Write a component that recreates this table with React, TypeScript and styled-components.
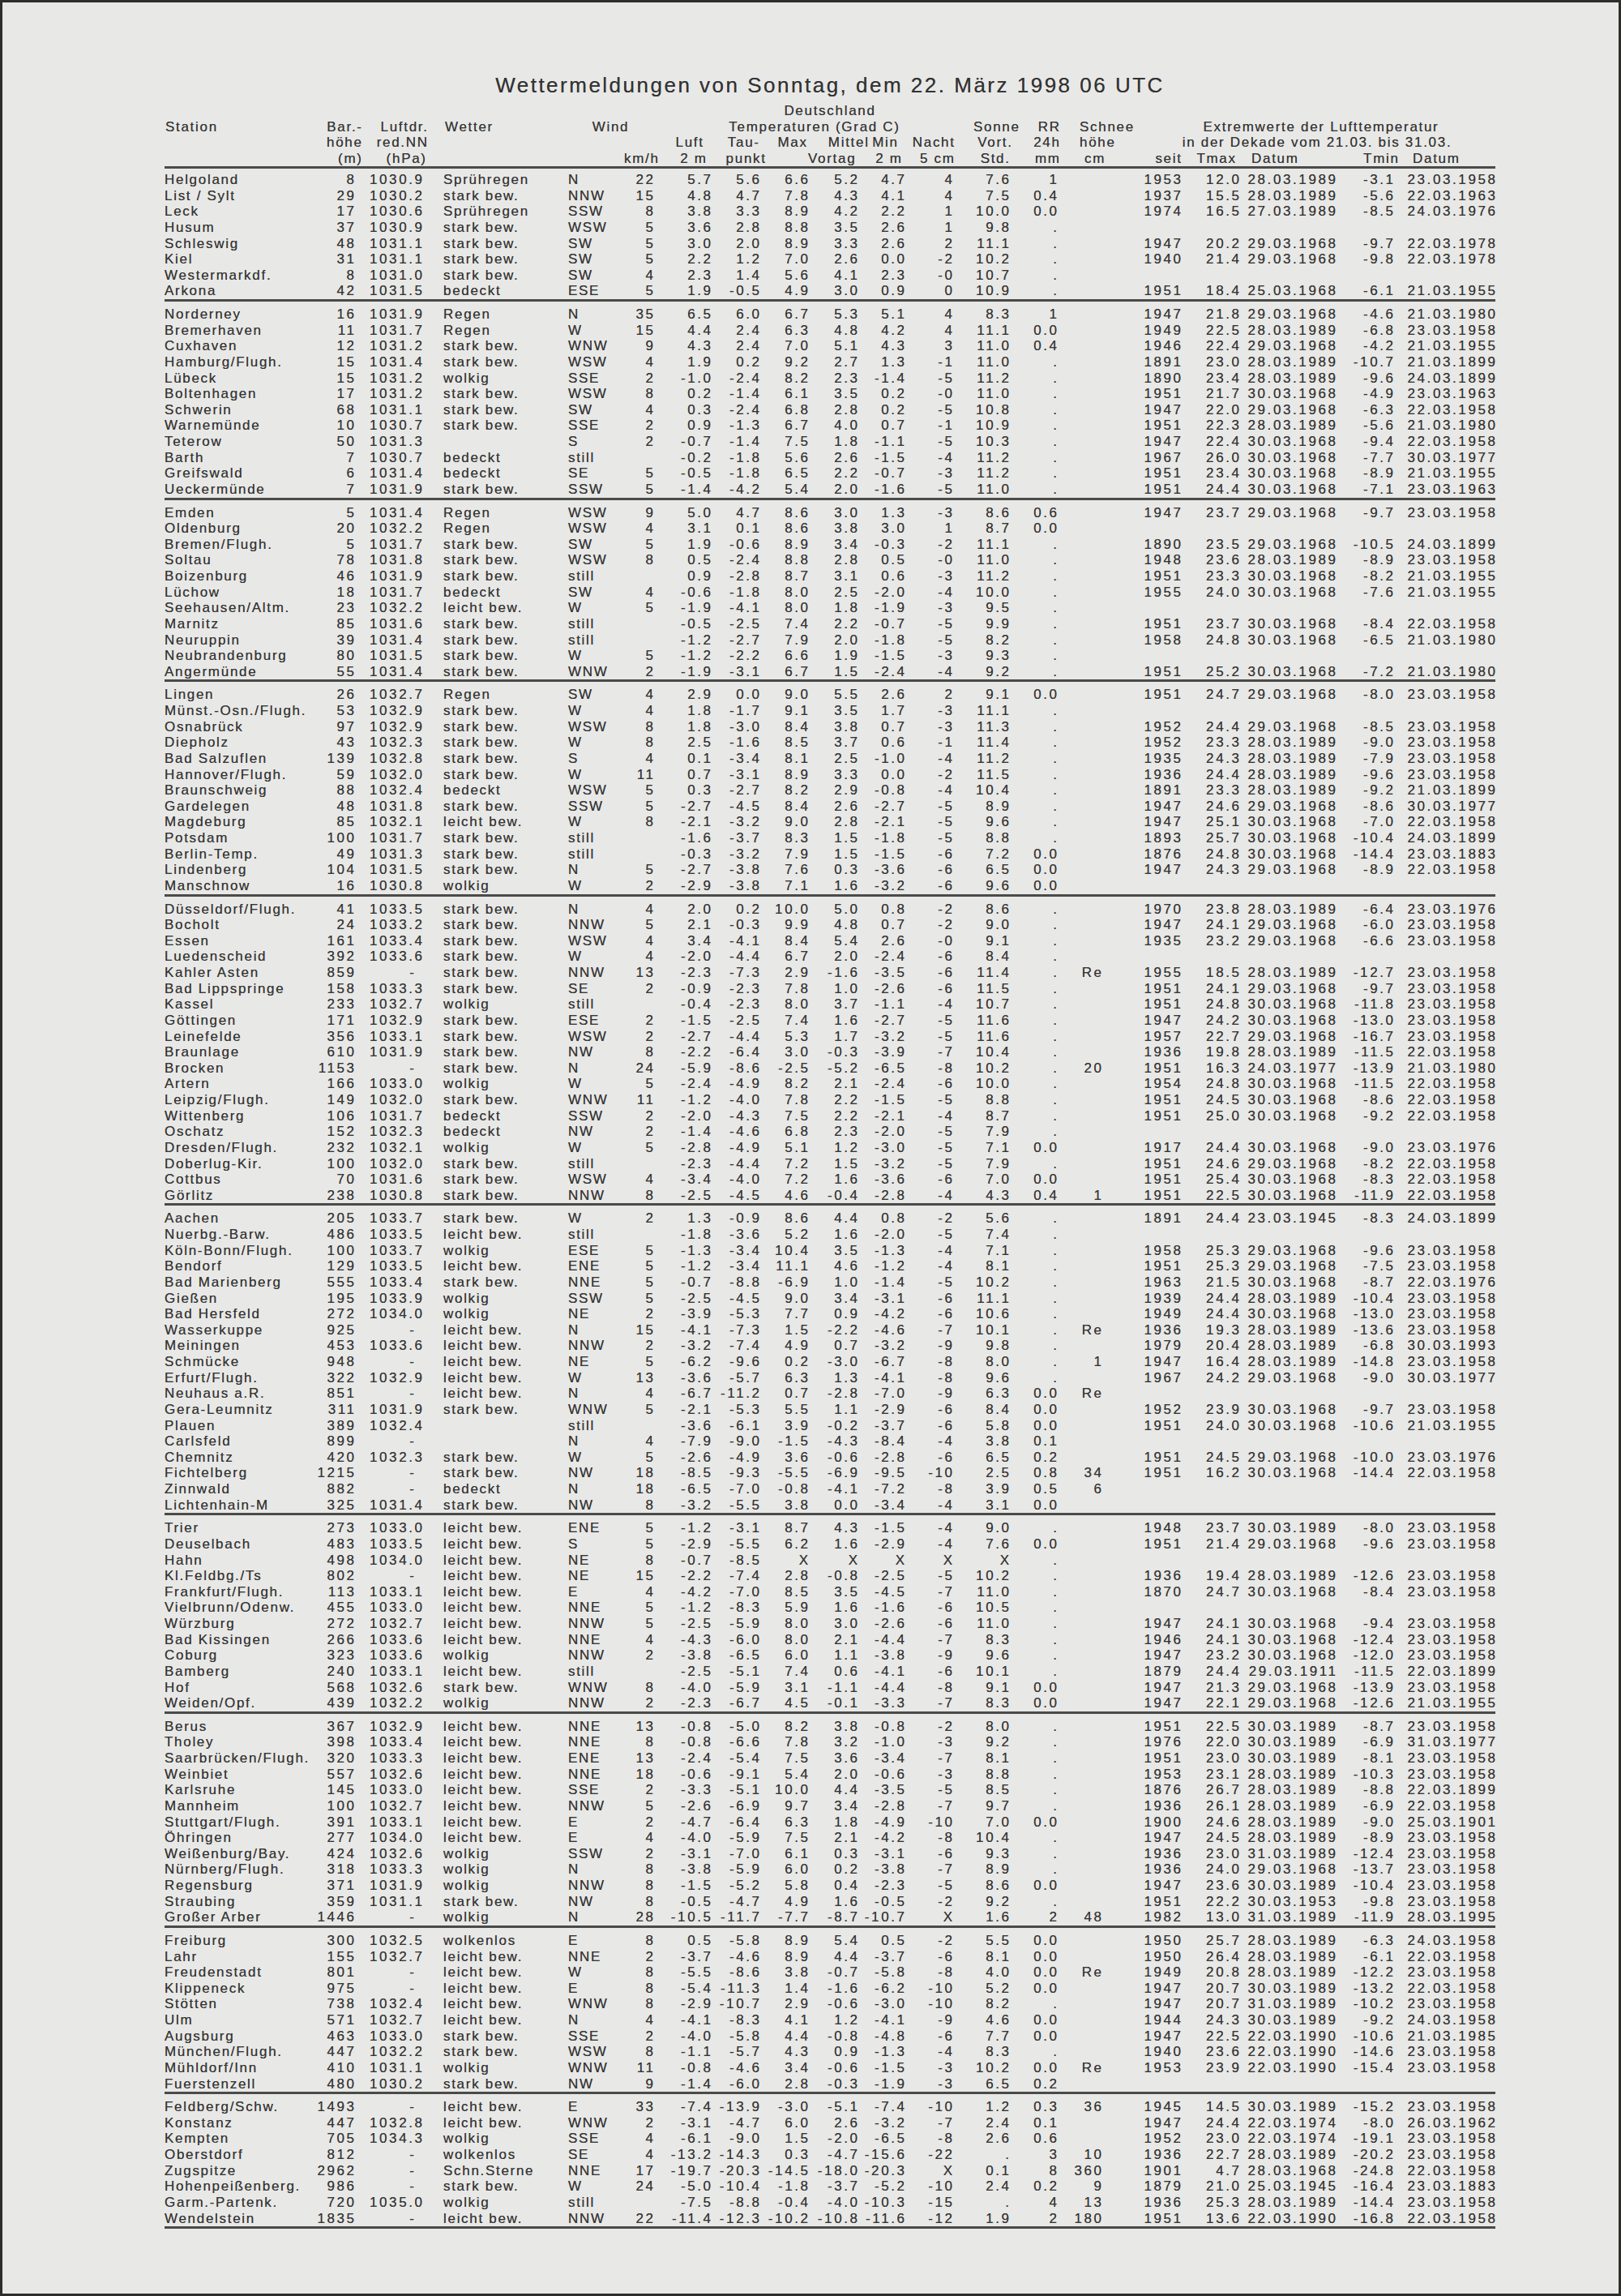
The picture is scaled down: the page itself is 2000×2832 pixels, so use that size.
import React from 'react';
import styled, { createGlobalStyle } from 'styled-components';

// column tracks of the table, left edge of the sheet is x=203
const COLS =
  '177px 57px 84px 180px 69px 36px 71px 60px 60px 61px 58px 59px 70px 59px 55px 98px 72px 119px 71px 126px';

const TEXT_LS = 1.7;
const NUM_LS = 2.6;

type Align = 'left' | 'right' | 'center';

interface ColDef {
  align: Align;
  pad?: number;
  num?: boolean;
}

const BODY: ColDef[] = [
  { align: 'left' }, // Station
  { align: 'right', num: true }, // Bar.-höhe
  { align: 'right', num: true }, // Luftdruck
  { align: 'left', pad: 26 }, // Wetter
  { align: 'left' }, // Windrichtung
  { align: 'right', num: true }, // km/h
  { align: 'right', num: true }, // Luft 2 m
  { align: 'right', num: true }, // Taupunkt
  { align: 'right', num: true }, // Max
  { align: 'right', num: true }, // Mittel
  { align: 'right', num: true }, // Min 2 m
  { align: 'right', num: true }, // Nacht 5 cm
  { align: 'right', num: true }, // Sonne
  { align: 'right', num: true }, // RR
  { align: 'right', num: true }, // Schnee
  { align: 'right', num: true }, // seit
  { align: 'right', num: true }, // Tmax
  { align: 'right', num: true }, // Datum
  { align: 'right', num: true }, // Tmin
  { align: 'right', num: true }, // Datum
];

const GROUPS: string[][] = [
  [
    'Helgoland|8|1030.9|Sprühregen|N|22|5.7|5.6|6.6|5.2|4.7|4|7.6|1||1953|12.0|28.03.1989|-3.1|23.03.1958',
    'List / Sylt|29|1030.2|stark bew.|NNW|15|4.8|4.7|7.8|4.3|4.1|4|7.5|0.4||1937|15.5|28.03.1989|-5.6|22.03.1963',
    'Leck|17|1030.6|Sprühregen|SSW|8|3.8|3.3|8.9|4.2|2.2|1|10.0|0.0||1974|16.5|27.03.1989|-8.5|24.03.1976',
    'Husum|37|1030.9|stark bew.|WSW|5|3.6|2.8|8.8|3.5|2.6|1|9.8|.||||||',
    'Schleswig|48|1031.1|stark bew.|SW|5|3.0|2.0|8.9|3.3|2.6|2|11.1|.||1947|20.2|29.03.1968|-9.7|22.03.1978',
    'Kiel|31|1031.1|stark bew.|SW|5|2.2|1.2|7.0|2.6|0.0|-2|10.2|.||1940|21.4|29.03.1968|-9.8|22.03.1978',
    'Westermarkdf.|8|1031.0|stark bew.|SW|4|2.3|1.4|5.6|4.1|2.3|-0|10.7|.||||||',
    'Arkona|42|1031.5|bedeckt|ESE|5|1.9|-0.5|4.9|3.0|0.9|0|10.9|.||1951|18.4|25.03.1968|-6.1|21.03.1955',
  ],
  [
    'Norderney|16|1031.9|Regen|N|35|6.5|6.0|6.7|5.3|5.1|4|8.3|1||1947|21.8|29.03.1968|-4.6|21.03.1980',
    'Bremerhaven|11|1031.7|Regen|W|15|4.4|2.4|6.3|4.8|4.2|4|11.1|0.0||1949|22.5|28.03.1989|-6.8|23.03.1958',
    'Cuxhaven|12|1031.2|stark bew.|WNW|9|4.3|2.4|7.0|5.1|4.3|3|11.0|0.4||1946|22.4|29.03.1968|-4.2|21.03.1955',
    'Hamburg/Flugh.|15|1031.4|stark bew.|WSW|4|1.9|0.2|9.2|2.7|1.3|-1|11.0|.||1891|23.0|28.03.1989|-10.7|21.03.1899',
    'Lübeck|15|1031.2|wolkig|SSE|2|-1.0|-2.4|8.2|2.3|-1.4|-5|11.2|.||1890|23.4|28.03.1989|-9.6|24.03.1899',
    'Boltenhagen|17|1031.2|stark bew.|WSW|8|0.2|-1.4|6.1|3.5|0.2|-0|11.0|.||1951|21.7|30.03.1968|-4.9|23.03.1963',
    'Schwerin|68|1031.1|stark bew.|SW|4|0.3|-2.4|6.8|2.8|0.2|-5|10.8|.||1947|22.0|29.03.1968|-6.3|22.03.1958',
    'Warnemünde|10|1030.7|stark bew.|SSE|2|0.9|-1.3|6.7|4.0|0.7|-1|10.9|.||1951|22.3|28.03.1989|-5.6|21.03.1980',
    'Teterow|50|1031.3||S|2|-0.7|-1.4|7.5|1.8|-1.1|-5|10.3|.||1947|22.4|30.03.1968|-9.4|22.03.1958',
    'Barth|7|1030.7|bedeckt|still||-0.2|-1.8|5.6|2.6|-1.5|-4|11.2|.||1967|26.0|30.03.1968|-7.7|30.03.1977',
    'Greifswald|6|1031.4|bedeckt|SE|5|-0.5|-1.8|6.5|2.2|-0.7|-3|11.2|.||1951|23.4|30.03.1968|-8.9|21.03.1955',
    'Ueckermünde|7|1031.9|stark bew.|SSW|5|-1.4|-4.2|5.4|2.0|-1.6|-5|11.0|.||1951|24.4|30.03.1968|-7.1|23.03.1963',
  ],
  [
    'Emden|5|1031.4|Regen|WSW|9|5.0|4.7|8.6|3.0|1.3|-3|8.6|0.6||1947|23.7|29.03.1968|-9.7|23.03.1958',
    'Oldenburg|20|1032.2|Regen|WSW|4|3.1|0.1|8.6|3.8|3.0|1|8.7|0.0||||||',
    'Bremen/Flugh.|5|1031.7|stark bew.|SW|5|1.9|-0.6|8.9|3.4|-0.3|-2|11.1|.||1890|23.5|29.03.1968|-10.5|24.03.1899',
    'Soltau|78|1031.8|stark bew.|WSW|8|0.5|-2.4|8.8|2.8|0.5|-0|11.0|.||1948|23.6|28.03.1989|-8.9|23.03.1958',
    'Boizenburg|46|1031.9|stark bew.|still||0.9|-2.8|8.7|3.1|0.6|-3|11.2|.||1951|23.3|30.03.1968|-8.2|21.03.1955',
    'Lüchow|18|1031.7|bedeckt|SW|4|-0.6|-1.8|8.0|2.5|-2.0|-4|10.0|.||1955|24.0|30.03.1968|-7.6|21.03.1955',
    'Seehausen/Altm.|23|1032.2|leicht bew.|W|5|-1.9|-4.1|8.0|1.8|-1.9|-3|9.5|.||||||',
    'Marnitz|85|1031.6|stark bew.|still||-0.5|-2.5|7.4|2.2|-0.7|-5|9.9|.||1951|23.7|30.03.1968|-8.4|22.03.1958',
    'Neuruppin|39|1031.4|stark bew.|still||-1.2|-2.7|7.9|2.0|-1.8|-5|8.2|.||1958|24.8|30.03.1968|-6.5|21.03.1980',
    'Neubrandenburg|80|1031.5|stark bew.|W|5|-1.2|-2.2|6.6|1.9|-1.5|-3|9.3|.||||||',
    'Angermünde|55|1031.4|stark bew.|WNW|2|-1.9|-3.1|6.7|1.5|-2.4|-4|9.2|.||1951|25.2|30.03.1968|-7.2|21.03.1980',
  ],
  [
    'Lingen|26|1032.7|Regen|SW|4|2.9|0.0|9.0|5.5|2.6|2|9.1|0.0||1951|24.7|29.03.1968|-8.0|23.03.1958',
    'Münst.-Osn./Flugh.|53|1032.9|stark bew.|W|4|1.8|-1.7|9.1|3.5|1.7|-3|11.1|.||||||',
    'Osnabrück|97|1032.9|stark bew.|WSW|8|1.8|-3.0|8.4|3.8|0.7|-3|11.3|.||1952|24.4|29.03.1968|-8.5|23.03.1958',
    'Diepholz|43|1032.3|stark bew.|W|8|2.5|-1.6|8.5|3.7|0.6|-1|11.4|.||1952|23.3|28.03.1989|-9.0|23.03.1958',
    'Bad Salzuflen|139|1032.8|stark bew.|S|4|0.1|-3.4|8.1|2.5|-1.0|-4|11.2|.||1935|24.3|28.03.1989|-7.9|23.03.1958',
    'Hannover/Flugh.|59|1032.0|stark bew.|W|11|0.7|-3.1|8.9|3.3|0.0|-2|11.5|.||1936|24.4|28.03.1989|-9.6|23.03.1958',
    'Braunschweig|88|1032.4|bedeckt|WSW|5|0.3|-2.7|8.2|2.9|-0.8|-4|10.4|.||1891|23.3|28.03.1989|-9.2|21.03.1899',
    'Gardelegen|48|1031.8|stark bew.|SSW|5|-2.7|-4.5|8.4|2.6|-2.7|-5|8.9|.||1947|24.6|29.03.1968|-8.6|30.03.1977',
    'Magdeburg|85|1032.1|leicht bew.|W|8|-2.1|-3.2|9.0|2.8|-2.1|-5|9.6|.||1947|25.1|30.03.1968|-7.0|22.03.1958',
    'Potsdam|100|1031.7|stark bew.|still||-1.6|-3.7|8.3|1.5|-1.8|-5|8.8|.||1893|25.7|30.03.1968|-10.4|24.03.1899',
    'Berlin-Temp.|49|1031.3|stark bew.|still||-0.3|-3.2|7.9|1.5|-1.5|-6|7.2|0.0||1876|24.8|30.03.1968|-14.4|23.03.1883',
    'Lindenberg|104|1031.5|stark bew.|N|5|-2.7|-3.8|7.6|0.3|-3.6|-6|6.5|0.0||1947|24.3|29.03.1968|-8.9|22.03.1958',
    'Manschnow|16|1030.8|wolkig|W|2|-2.9|-3.8|7.1|1.6|-3.2|-6|9.6|0.0||||||',
  ],
  [
    'Düsseldorf/Flugh.|41|1033.5|stark bew.|N|4|2.0|0.2|10.0|5.0|0.8|-2|8.6|.||1970|23.8|28.03.1989|-6.4|23.03.1976',
    'Bocholt|24|1033.2|stark bew.|NNW|5|2.1|-0.3|9.9|4.8|0.7|-2|9.0|.||1947|24.1|29.03.1968|-6.0|23.03.1958',
    'Essen|161|1033.4|stark bew.|WSW|4|3.4|-4.1|8.4|5.4|2.6|-0|9.1|.||1935|23.2|29.03.1968|-6.6|23.03.1958',
    'Luedenscheid|392|1033.6|stark bew.|W|4|-2.0|-4.4|6.7|2.0|-2.4|-6|8.4|.||||||',
    'Kahler Asten|859|-|stark bew.|NNW|13|-2.3|-7.3|2.9|-1.6|-3.5|-6|11.4|.|Re|1955|18.5|28.03.1989|-12.7|23.03.1958',
    'Bad Lippspringe|158|1033.3|stark bew.|SE|2|-0.9|-2.3|7.8|1.0|-2.6|-6|11.5|.||1951|24.1|29.03.1968|-9.7|23.03.1958',
    'Kassel|233|1032.7|wolkig|still||-0.4|-2.3|8.0|3.7|-1.1|-4|10.7|.||1951|24.8|30.03.1968|-11.8|23.03.1958',
    'Göttingen|171|1032.9|stark bew.|ESE|2|-1.5|-2.5|7.4|1.6|-2.7|-5|11.6|.||1947|24.2|30.03.1968|-13.0|23.03.1958',
    'Leinefelde|356|1033.1|stark bew.|WSW|2|-2.7|-4.4|5.3|1.7|-3.2|-5|11.6|.||1957|22.7|29.03.1968|-16.7|23.03.1958',
    'Braunlage|610|1031.9|stark bew.|NW|8|-2.2|-6.4|3.0|-0.3|-3.9|-7|10.4|.||1936|19.8|28.03.1989|-11.5|22.03.1958',
    'Brocken|1153|-|stark bew.|N|24|-5.9|-8.6|-2.5|-5.2|-6.5|-8|10.2|.|20|1951|16.3|24.03.1977|-13.9|21.03.1980',
    'Artern|166|1033.0|wolkig|W|5|-2.4|-4.9|8.2|2.1|-2.4|-6|10.0|.||1954|24.8|30.03.1968|-11.5|22.03.1958',
    'Leipzig/Flugh.|149|1032.0|stark bew.|WNW|11|-1.2|-4.0|7.8|2.2|-1.5|-5|8.8|.||1951|24.5|30.03.1968|-8.6|22.03.1958',
    'Wittenberg|106|1031.7|bedeckt|SSW|2|-2.0|-4.3|7.5|2.2|-2.1|-4|8.7|.||1951|25.0|30.03.1968|-9.2|22.03.1958',
    'Oschatz|152|1032.3|bedeckt|NW|2|-1.4|-4.6|6.8|2.3|-2.0|-5|7.9|.||||||',
    'Dresden/Flugh.|232|1032.1|wolkig|W|5|-2.8|-4.9|5.1|1.2|-3.0|-5|7.1|0.0||1917|24.4|30.03.1968|-9.0|23.03.1976',
    'Doberlug-Kir.|100|1032.0|stark bew.|still||-2.3|-4.4|7.2|1.5|-3.2|-5|7.9|.||1951|24.6|29.03.1968|-8.2|22.03.1958',
    'Cottbus|70|1031.6|stark bew.|WSW|4|-3.4|-4.0|7.2|1.6|-3.6|-6|7.0|0.0||1951|25.4|30.03.1968|-8.3|22.03.1958',
    'Görlitz|238|1030.8|stark bew.|NNW|8|-2.5|-4.5|4.6|-0.4|-2.8|-4|4.3|0.4|1|1951|22.5|30.03.1968|-11.9|22.03.1958',
  ],
  [
    'Aachen|205|1033.7|stark bew.|W|2|1.3|-0.9|8.6|4.4|0.8|-2|5.6|.||1891|24.4|23.03.1945|-8.3|24.03.1899',
    'Nuerbg.-Barw.|486|1033.5|leicht bew.|still||-1.8|-3.6|5.2|1.6|-2.0|-5|7.4|.||||||',
    'Köln-Bonn/Flugh.|100|1033.7|wolkig|ESE|5|-1.3|-3.4|10.4|3.5|-1.3|-4|7.1|.||1958|25.3|29.03.1968|-9.6|23.03.1958',
    'Bendorf|129|1033.5|leicht bew.|ENE|5|-1.2|-3.4|11.1|4.6|-1.2|-4|8.1|.||1951|25.3|29.03.1968|-7.5|23.03.1958',
    'Bad Marienberg|555|1033.4|stark bew.|NNE|5|-0.7|-8.8|-6.9|1.0|-1.4|-5|10.2|.||1963|21.5|30.03.1968|-8.7|22.03.1976',
    'Gießen|195|1033.9|wolkig|SSW|5|-2.5|-4.5|9.0|3.4|-3.1|-6|11.1|.||1939|24.4|28.03.1989|-10.4|23.03.1958',
    'Bad Hersfeld|272|1034.0|wolkig|NE|2|-3.9|-5.3|7.7|0.9|-4.2|-6|10.6|.||1949|24.4|30.03.1968|-13.0|23.03.1958',
    'Wasserkuppe|925|-|leicht bew.|N|15|-4.1|-7.3|1.5|-2.2|-4.6|-7|10.1|.|Re|1936|19.3|28.03.1989|-13.6|23.03.1958',
    'Meiningen|453|1033.6|leicht bew.|NNW|2|-3.2|-7.4|4.9|0.7|-3.2|-9|9.8|.||1979|20.4|28.03.1989|-6.8|30.03.1993',
    'Schmücke|948|-|leicht bew.|NE|5|-6.2|-9.6|0.2|-3.0|-6.7|-8|8.0|.|1|1947|16.4|28.03.1989|-14.8|23.03.1958',
    'Erfurt/Flugh.|322|1032.9|leicht bew.|W|13|-3.6|-5.7|6.3|1.3|-4.1|-8|9.6|.||1967|24.2|29.03.1968|-9.0|30.03.1977',
    'Neuhaus a.R.|851|-|leicht bew.|N|4|-6.7|-11.2|0.7|-2.8|-7.0|-9|6.3|0.0|Re|||||',
    'Gera-Leumnitz|311|1031.9|stark bew.|WNW|5|-2.1|-5.3|5.5|1.1|-2.9|-6|8.4|0.0||1952|23.9|30.03.1968|-9.7|23.03.1958',
    'Plauen|389|1032.4||still||-3.6|-6.1|3.9|-0.2|-3.7|-6|5.8|0.0||1951|24.0|30.03.1968|-10.6|21.03.1955',
    'Carlsfeld|899|-||N|4|-7.9|-9.0|-1.5|-4.3|-8.4|-4|3.8|0.1||||||',
    'Chemnitz|420|1032.3|stark bew.|W|5|-2.6|-4.9|3.6|-0.6|-2.8|-6|6.5|0.2||1951|24.5|29.03.1968|-10.0|23.03.1976',
    'Fichtelberg|1215|-|stark bew.|NW|18|-8.5|-9.3|-5.5|-6.9|-9.5|-10|2.5|0.8|34|1951|16.2|30.03.1968|-14.4|22.03.1958',
    'Zinnwald|882|-|bedeckt|N|18|-6.5|-7.0|-0.8|-4.1|-7.2|-8|3.9|0.5|6|||||',
    'Lichtenhain-M|325|1031.4|stark bew.|NW|8|-3.2|-5.5|3.8|0.0|-3.4|-4|3.1|0.0||||||',
  ],
  [
    'Trier|273|1033.0|leicht bew.|ENE|5|-1.2|-3.1|8.7|4.3|-1.5|-4|9.0|.||1948|23.7|30.03.1989|-8.0|23.03.1958',
    'Deuselbach|483|1033.5|leicht bew.|S|5|-2.9|-5.5|6.2|1.6|-2.9|-4|7.6|0.0||1951|21.4|29.03.1968|-9.6|23.03.1958',
    'Hahn|498|1034.0|leicht bew.|NE|8|-0.7|-8.5|X|X|X|X|X|.||||||',
    'Kl.Feldbg./Ts|802|-|leicht bew.|NE|15|-2.2|-7.4|2.8|-0.8|-2.5|-5|10.2|.||1936|19.4|28.03.1989|-12.6|23.03.1958',
    'Frankfurt/Flugh.|113|1033.1|leicht bew.|E|4|-4.2|-7.0|8.5|3.5|-4.5|-7|11.0|.||1870|24.7|30.03.1968|-8.4|23.03.1958',
    'Vielbrunn/Odenw.|455|1033.0|leicht bew.|NNE|5|-1.2|-8.3|5.9|1.6|-1.6|-6|10.5|.||||||',
    'Würzburg|272|1032.7|leicht bew.|NNW|5|-2.5|-5.9|8.0|3.0|-2.6|-6|11.0|.||1947|24.1|30.03.1968|-9.4|23.03.1958',
    'Bad Kissingen|266|1033.6|leicht bew.|NNE|4|-4.3|-6.0|8.0|2.1|-4.4|-7|8.3|.||1946|24.1|30.03.1968|-12.4|23.03.1958',
    'Coburg|323|1033.6|wolkig|NNW|2|-3.8|-6.5|6.0|1.1|-3.8|-9|9.6|.||1947|23.2|30.03.1968|-12.0|23.03.1958',
    'Bamberg|240|1033.1|leicht bew.|still||-2.5|-5.1|7.4|0.6|-4.1|-6|10.1|.||1879|24.4|29.03.1911|-11.5|22.03.1899',
    'Hof|568|1032.6|stark bew.|WNW|8|-4.0|-5.9|3.1|-1.1|-4.4|-8|9.1|0.0||1947|21.3|29.03.1968|-13.9|23.03.1958',
    'Weiden/Opf.|439|1032.2|wolkig|NNW|2|-2.3|-6.7|4.5|-0.1|-3.3|-7|8.3|0.0||1947|22.1|29.03.1968|-12.6|21.03.1955',
  ],
  [
    'Berus|367|1032.9|leicht bew.|NNE|13|-0.8|-5.0|8.2|3.8|-0.8|-2|8.0|.||1951|22.5|30.03.1989|-8.7|23.03.1958',
    'Tholey|398|1033.4|leicht bew.|NNE|8|-0.8|-6.6|7.8|3.2|-1.0|-3|9.2|.||1976|22.0|30.03.1989|-6.9|31.03.1977',
    'Saarbrücken/Flugh.|320|1033.3|leicht bew.|ENE|13|-2.4|-5.4|7.5|3.6|-3.4|-7|8.1|.||1951|23.0|30.03.1989|-8.1|23.03.1958',
    'Weinbiet|557|1032.6|leicht bew.|NNE|18|-0.6|-9.1|5.4|2.0|-0.6|-3|8.8|.||1953|23.1|28.03.1989|-10.3|23.03.1958',
    'Karlsruhe|145|1033.0|leicht bew.|SSE|2|-3.3|-5.1|10.0|4.4|-3.5|-5|8.5|.||1876|26.7|28.03.1989|-8.8|22.03.1899',
    'Mannheim|100|1032.7|leicht bew.|NNW|5|-2.6|-6.9|9.7|3.4|-2.8|-7|9.7|.||1936|26.1|28.03.1989|-6.9|22.03.1958',
    'Stuttgart/Flugh.|391|1033.1|leicht bew.|E|2|-4.7|-6.4|6.3|1.8|-4.9|-10|7.0|0.0||1900|24.6|28.03.1989|-9.0|25.03.1901',
    'Öhringen|277|1034.0|leicht bew.|E|4|-4.0|-5.9|7.5|2.1|-4.2|-8|10.4|.||1947|24.5|28.03.1989|-8.9|23.03.1958',
    'Weißenburg/Bay.|424|1032.6|wolkig|SSW|2|-3.1|-7.0|6.1|0.3|-3.1|-6|9.3|.||1936|23.0|31.03.1989|-12.4|23.03.1958',
    'Nürnberg/Flugh.|318|1033.3|wolkig|N|8|-3.8|-5.9|6.0|0.2|-3.8|-7|8.9|.||1936|24.0|29.03.1968|-13.7|23.03.1958',
    'Regensburg|371|1031.9|wolkig|NNW|8|-1.5|-5.2|5.8|0.4|-2.3|-5|8.6|0.0||1947|23.6|30.03.1989|-10.4|23.03.1958',
    'Straubing|359|1031.1|stark bew.|NW|8|-0.5|-4.7|4.9|1.6|-0.5|-2|9.2|.||1951|22.2|30.03.1953|-9.8|23.03.1958',
    'Großer Arber|1446|-|wolkig|N|28|-10.5|-11.7|-7.7|-8.7|-10.7|X|1.6|2|48|1982|13.0|31.03.1989|-11.9|28.03.1995',
  ],
  [
    'Freiburg|300|1032.5|wolkenlos|E|8|0.5|-5.8|8.9|5.4|0.5|-2|5.5|0.0||1950|25.7|28.03.1989|-6.3|24.03.1958',
    'Lahr|155|1032.7|leicht bew.|NNE|2|-3.7|-4.6|8.9|4.4|-3.7|-6|8.1|0.0||1950|26.4|28.03.1989|-6.1|22.03.1958',
    'Freudenstadt|801|-|leicht bew.|W|8|-5.5|-8.6|3.8|-0.7|-5.8|-8|4.0|0.0|Re|1949|20.8|28.03.1989|-12.2|23.03.1958',
    'Klippeneck|975|-|leicht bew.|E|8|-5.4|-11.3|1.4|-1.6|-6.2|-10|5.2|0.0||1947|20.7|30.03.1989|-13.2|22.03.1958',
    'Stötten|738|1032.4|leicht bew.|WNW|8|-2.9|-10.7|2.9|-0.6|-3.0|-10|8.2|.||1947|20.7|31.03.1989|-10.2|23.03.1958',
    'Ulm|571|1032.7|leicht bew.|N|4|-4.1|-8.3|4.1|1.2|-4.1|-9|4.6|0.0||1944|24.3|30.03.1989|-9.2|24.03.1958',
    'Augsburg|463|1033.0|stark bew.|SSE|2|-4.0|-5.8|4.4|-0.8|-4.8|-6|7.7|0.0||1947|22.5|22.03.1990|-10.6|21.03.1985',
    'München/Flugh.|447|1032.2|stark bew.|WSW|8|-1.1|-5.7|4.3|0.9|-1.3|-4|8.3|.||1940|23.6|22.03.1990|-14.6|23.03.1958',
    'Mühldorf/Inn|410|1031.1|wolkig|WNW|11|-0.8|-4.6|3.4|-0.6|-1.5|-3|10.2|0.0|Re|1953|23.9|22.03.1990|-15.4|23.03.1958',
    'Fuerstenzell|480|1030.2|stark bew.|NW|9|-1.4|-6.0|2.8|-0.3|-1.9|-3|6.5|0.2||||||',
  ],
  [
    'Feldberg/Schw.|1493|-|leicht bew.|E|33|-7.4|-13.9|-3.0|-5.1|-7.4|-10|1.2|0.3|36|1945|14.5|30.03.1989|-15.2|23.03.1958',
    'Konstanz|447|1032.8|leicht bew.|WNW|2|-3.1|-4.7|6.0|2.6|-3.2|-7|2.4|0.1||1947|24.4|22.03.1974|-8.0|26.03.1962',
    'Kempten|705|1034.3|wolkig|SSE|4|-6.1|-9.0|1.5|-2.0|-6.5|-8|2.6|0.6||1952|23.0|22.03.1974|-19.1|23.03.1958',
    'Oberstdorf|812|-|wolkenlos|SE|4|-13.2|-14.3|0.3|-4.7|-15.6|-22|.|3|10|1936|22.7|28.03.1989|-20.2|23.03.1958',
    'Zugspitze|2962|-|Schn.Sterne|NNE|17|-19.7|-20.3|-14.5|-18.0|-20.3|X|0.1|8|360|1901|4.7|28.03.1968|-24.8|22.03.1958',
    'Hohenpeißenberg.|986|-|stark bew.|W|24|-5.0|-10.4|-1.8|-3.7|-5.2|-10|2.4|0.2|9|1879|21.0|25.03.1945|-16.4|23.03.1883',
    'Garm.-Partenk.|720|1035.0|wolkig|still||-7.5|-8.8|-0.4|-4.0|-10.3|-15|.|4|13|1936|25.3|28.03.1989|-14.4|23.03.1958',
    'Wendelstein|1835|-|leicht bew.|NNW|22|-11.4|-12.3|-10.2|-10.8|-11.6|-12|1.9|2|180|1951|13.6|22.03.1990|-16.8|22.03.1958',
  ],
];

interface HeadDef {
  r: number;
  c: string;
  t: string;
  a: Align;
  x?: number;
}

// x: left/center -> padding-left, right -> how far the text reaches past the track
const HEAD: HeadDef[] = [
  { r: 1, c: '1', t: 'Station', a: 'left', x: 1 },
  { r: 1, c: '2', t: 'Bar.-', a: 'right', x: 9 },
  { r: 1, c: '3', t: 'Luftdr.', a: 'right', x: 6 },
  { r: 1, c: '4', t: 'Wetter', a: 'left', x: 28 },
  { r: 1, c: '5 / 7', t: 'Wind', a: 'center' },
  { r: 1, c: '8 / 12', t: 'Temperaturen (Grad C)', a: 'center', x: 17 },
  { r: 1, c: '13', t: 'Sonne', a: 'right', x: 12 },
  { r: 1, c: '14', t: 'RR', a: 'right', x: 3 },
  { r: 1, c: '15', t: 'Schnee', a: 'left', x: 28 },
  { r: 1, c: '16 / 21', t: 'Extremwerte der Lufttemperatur', a: 'center', x: 56 },
  { r: 2, c: '2', t: 'höhe', a: 'right', x: 9 },
  { r: 2, c: '3', t: 'red.NN', a: 'right', x: 6 },
  { r: 2, c: '7', t: 'Luft', a: 'right', x: -10 },
  { r: 2, c: '8', t: 'Tau-', a: 'right', x: -1 },
  { r: 2, c: '9', t: 'Max', a: 'right', x: -2 },
  { r: 2, c: '10', t: 'Mittel', a: 'right', x: 13 },
  { r: 2, c: '11', t: 'Min', a: 'right', x: -9 },
  { r: 2, c: '12', t: 'Nacht', a: 'right', x: 2 },
  { r: 2, c: '13', t: 'Vort.', a: 'right', x: 3 },
  { r: 2, c: '14', t: '24h', a: 'right', x: 3 },
  { r: 2, c: '15', t: 'höhe', a: 'left', x: 28 },
  { r: 2, c: '16 / 21', t: 'in der Dekade vom 21.03. bis 31.03.', a: 'center', x: 46 },
  { r: 3, c: '2', t: '(m)', a: 'right', x: 9 },
  { r: 3, c: '3', t: '(hPa)', a: 'right', x: 4 },
  { r: 3, c: '6', t: 'km/h', a: 'right', x: 1 },
  { r: 3, c: '7', t: '2 m', a: 'right', x: -6 },
  { r: 3, c: '8', t: 'punkt', a: 'right', x: 7 },
  { r: 3, c: '10', t: 'Vortag', a: 'right', x: -13 },
  { r: 3, c: '11', t: '2 m', a: 'right', x: -4 },
  { r: 3, c: '12', t: '5 cm', a: 'right', x: 2 },
  { r: 3, c: '13', t: 'Std.', a: 'right', x: 0 },
  { r: 3, c: '14', t: 'mm', a: 'right', x: 3 },
  { r: 3, c: '15', t: 'cm', a: 'left', x: 34 },
  { r: 3, c: '16', t: 'seit', a: 'right', x: 0 },
  { r: 3, c: '17', t: 'Tmax', a: 'right', x: -5 },
  { r: 3, c: '18', t: 'Datum', a: 'left', x: 15 },
  { r: 3, c: '19', t: 'Tmin', a: 'right', x: 6 },
  { r: 3, c: '20', t: 'Datum', a: 'left', x: 24 },
];

const GlobalStyle = createGlobalStyle`
  html, body {
    margin: 0;
    padding: 0;
    background: #e8e8e6;
  }
  body {
    font-family: "Liberation Sans", Arial, Helvetica, sans-serif;
    color: #363636;
    /* scanned print: slightly heavier, softer strokes */
    text-shadow: 0 0 0.5px rgba(40, 40, 40, 0.7);
  }
`;

const Page = styled.div`
  box-sizing: border-box;
  width: 2000px;
  height: 2832px;
  border: 3px solid #2d2d2b;
  background: #e8e8e6;
  padding: 87px 0 0 200px;
`;

const Sheet = styled.div`
  width: 1642px;
`;

const Title = styled.h1`
  margin: 0 0 7px;
  height: 30px;
  line-height: 30px;
  text-align: center;
  font-size: 26px;
  font-weight: normal;
  letter-spacing: 2.5px;
  color: #333;
`;

const Country = styled.div`
  height: 19.5px;
  line-height: 19.5px;
  text-align: center;
  font-size: 17px;
  letter-spacing: ${TEXT_LS}px;
`;

const HeadGrid = styled.div`
  display: grid;
  grid-template-columns: ${COLS};
  grid-template-rows: repeat(3, 19.5px);
  border-bottom: 3px solid #4a4a48;
  font-size: 17px;
  line-height: 19.5px;
  white-space: nowrap;
`;

const HeadCell = styled.div<{ $row: number; $col: string; $align: Align; $x: number }>`
  grid-row: ${(p) => p.$row};
  grid-column: ${(p) => p.$col};
  text-align: ${(p) => p.$align};
  letter-spacing: ${TEXT_LS}px;
  padding-left: ${(p) => (p.$align === 'right' ? 0 : p.$x)}px;
  margin-right: ${(p) => (p.$align === 'right' ? -(p.$x + TEXT_LS) : 0)}px;
`;

const Group = styled.div`
  padding-top: 4px;
  border-bottom: 3px solid #4a4a48;

  & + & {
    padding-top: 6px;
  }
`;

const Row = styled.div`
  display: grid;
  grid-template-columns: ${COLS};
  height: 19.63px;
  line-height: 19.63px;
  font-size: 17px;
  white-space: nowrap;
`;

const Cell = styled.span<{ $align: Align; $pad: number; $num: boolean; $inset: number }>`
  text-align: ${(p) => p.$align};
  letter-spacing: ${(p) => (p.$num ? NUM_LS : TEXT_LS)}px;
  padding-left: ${(p) => p.$pad}px;
  padding-right: ${(p) => p.$inset}px;
  margin-right: ${(p) => (p.$align === 'right' ? -(p.$num ? NUM_LS : TEXT_LS) : 0)}px;
`;

function StationRow({ line }: { line: string }) {
  const cells = line.split('|');
  return (
    <Row>
      {BODY.map((col, i) => {
        const v = cells[i] ?? '';
        // the dash for a missing pressure sits under the decimal point
        const inset = i === 2 && v === '-' ? 10 : 0;
        return (
          <Cell key={i} $align={col.align} $pad={col.pad ?? 0} $num={!!col.num} $inset={inset}>
            {v}
          </Cell>
        );
      })}
    </Row>
  );
}

export default function App() {
  return (
    <>
      <GlobalStyle />
      <Page>
        <Sheet>
          <Title>Wettermeldungen von Sonntag, dem 22. März 1998 06 UTC</Title>
          <Country>Deutschland</Country>
          <HeadGrid>
            {HEAD.map((h, i) => (
              <HeadCell key={i} $row={h.r} $col={h.c} $align={h.a} $x={h.x ?? 0}>
                {h.t}
              </HeadCell>
            ))}
          </HeadGrid>
          {GROUPS.map((g, gi) => (
            <Group key={gi}>
              {g.map((line) => (
                <StationRow key={line} line={line} />
              ))}
            </Group>
          ))}
        </Sheet>
      </Page>
    </>
  );
}
